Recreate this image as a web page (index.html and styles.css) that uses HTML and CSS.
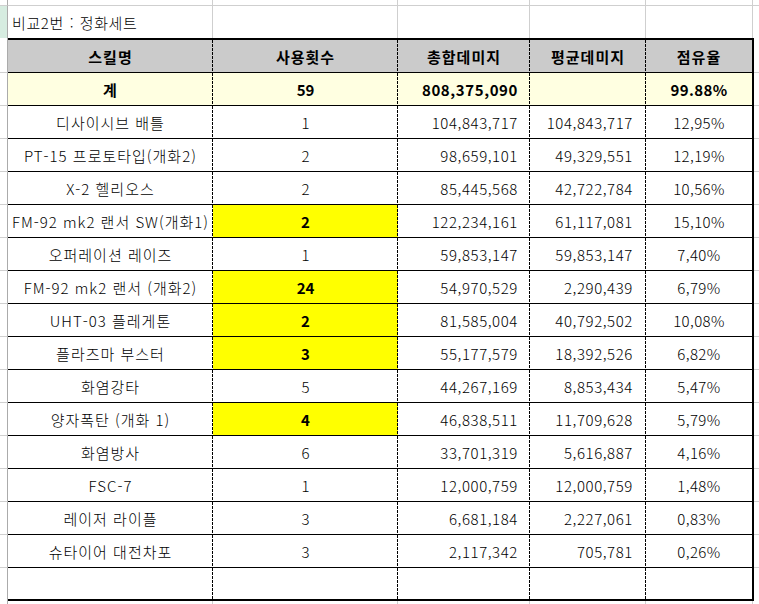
FILE: index.html
```html
<!DOCTYPE html>
<html lang="ko">
<head>
<meta charset="utf-8">
<title>비교2번 : 정화세트</title>
<link rel="stylesheet" href="styles.css">
</head>
<body>
<div class="sheet">
  <div class="row r-top">
    <div class="rh"></div><div class="c c1 g"></div><div class="c c2 g"></div><div class="c c3 g"></div><div class="c c4 g"></div><div class="c c5o g"></div><div class="rx"></div>
  </div>
  <div class="row r-title">
    <div class="rh rh-sel"></div><div class="c c1 g title">비교2번 : 정화세트</div><div class="c c2 g"></div><div class="c c3 g"></div><div class="c c4 g"></div><div class="c c5o g"></div><div class="rx"></div>
  </div>
  <div class="row thick">
    <div class="rh"></div><div class="bar"></div><div class="rx"></div>
  </div>
  <div class="row tr hd">
    <div class="rh"></div><div class="c c1 d">스킬명</div><div class="c c2 d">사용횟수</div><div class="c c3 d">총합데미지</div><div class="c c4 d">평균데미지</div><div class="c c5">점유율</div><div class="rx"></div>
  </div>
  <div class="row tr tot">
    <div class="rh"></div><div class="c c1 d">계</div><div class="c c2 d">59</div><div class="c c3 d num">808,375,090</div><div class="c c4 d num"></div><div class="c c5">99.88%</div><div class="rx"></div>
  </div>
  <div class="row tr">
    <div class="rh"></div><div class="c c1 d">디사이시브 배틀</div><div class="c c2 d">1</div><div class="c c3 d num">104,843,717</div><div class="c c4 d num">104,843,717</div><div class="c c5">12,95%</div><div class="rx"></div>
  </div>
  <div class="row tr">
    <div class="rh"></div><div class="c c1 d">PT-15 프로토타입(개화2)</div><div class="c c2 d">2</div><div class="c c3 d num">98,659,101</div><div class="c c4 d num">49,329,551</div><div class="c c5">12,19%</div><div class="rx"></div>
  </div>
  <div class="row tr">
    <div class="rh"></div><div class="c c1 d">X-2 헬리오스</div><div class="c c2 d">2</div><div class="c c3 d num">85,445,568</div><div class="c c4 d num">42,722,784</div><div class="c c5">10,56%</div><div class="rx"></div>
  </div>
  <div class="row tr">
    <div class="rh"></div><div class="c c1 d">FM-92 mk2 랜서 SW(개화1)</div><div class="c c2 d hl">2</div><div class="c c3 d num">122,234,161</div><div class="c c4 d num">61,117,081</div><div class="c c5">15,10%</div><div class="rx"></div>
  </div>
  <div class="row tr">
    <div class="rh"></div><div class="c c1 d">오퍼레이션 레이즈</div><div class="c c2 d">1</div><div class="c c3 d num">59,853,147</div><div class="c c4 d num">59,853,147</div><div class="c c5">7,40%</div><div class="rx"></div>
  </div>
  <div class="row tr">
    <div class="rh"></div><div class="c c1 d">FM-92 mk2 랜서 (개화2)</div><div class="c c2 d hl">24</div><div class="c c3 d num">54,970,529</div><div class="c c4 d num">2,290,439</div><div class="c c5">6,79%</div><div class="rx"></div>
  </div>
  <div class="row tr">
    <div class="rh"></div><div class="c c1 d">UHT-03 플레게톤</div><div class="c c2 d hl">2</div><div class="c c3 d num">81,585,004</div><div class="c c4 d num">40,792,502</div><div class="c c5">10,08%</div><div class="rx"></div>
  </div>
  <div class="row tr">
    <div class="rh"></div><div class="c c1 d">플라즈마 부스터</div><div class="c c2 d hl">3</div><div class="c c3 d num">55,177,579</div><div class="c c4 d num">18,392,526</div><div class="c c5">6,82%</div><div class="rx"></div>
  </div>
  <div class="row tr">
    <div class="rh"></div><div class="c c1 d">화염강타</div><div class="c c2 d">5</div><div class="c c3 d num">44,267,169</div><div class="c c4 d num">8,853,434</div><div class="c c5">5,47%</div><div class="rx"></div>
  </div>
  <div class="row tr">
    <div class="rh"></div><div class="c c1 d">양자폭탄 (개화 1)</div><div class="c c2 d hl">4</div><div class="c c3 d num">46,838,511</div><div class="c c4 d num">11,709,628</div><div class="c c5">5,79%</div><div class="rx"></div>
  </div>
  <div class="row tr">
    <div class="rh"></div><div class="c c1 d">화염방사</div><div class="c c2 d">6</div><div class="c c3 d num">33,701,319</div><div class="c c4 d num">5,616,887</div><div class="c c5">4,16%</div><div class="rx"></div>
  </div>
  <div class="row tr">
    <div class="rh"></div><div class="c c1 d">FSC-7</div><div class="c c2 d">1</div><div class="c c3 d num">12,000,759</div><div class="c c4 d num">12,000,759</div><div class="c c5">1,48%</div><div class="rx"></div>
  </div>
  <div class="row tr">
    <div class="rh"></div><div class="c c1 d">레이저 라이플</div><div class="c c2 d">3</div><div class="c c3 d num">6,681,184</div><div class="c c4 d num">2,227,061</div><div class="c c5">0,83%</div><div class="rx"></div>
  </div>
  <div class="row tr">
    <div class="rh"></div><div class="c c1 d">슈타이어 대전차포</div><div class="c c2 d">3</div><div class="c c3 d num">2,117,342</div><div class="c c4 d num">705,781</div><div class="c c5">0,26%</div><div class="rx"></div>
  </div>
  <div class="row tr last">
    <div class="rh"></div><div class="c c1 d"></div><div class="c c2 d"></div><div class="c c3 d"></div><div class="c c4 d"></div><div class="c c5"></div><div class="rx"></div>
  </div>
  <div class="row thick">
    <div class="rh"></div><div class="bar"></div><div class="rx"></div>
  </div>
  <div class="row r-bot">
    <div class="rh"></div><div class="c c1 g"></div><div class="c c2 g"></div><div class="c c3 g"></div><div class="c c4 g"></div><div class="c c5o g"></div><div class="rx"></div>
  </div>
</div>
</body>
</html>
```

FILE: styles.css
```css
html, body {
  margin: 0;
  padding: 0;
  background: #ffffff;
}

body {
  font-family: "Noto Sans CJK KR", "Noto Sans", sans-serif;
  font-size: 15px;
  font-weight: 300;
  color: #000000;
}

.sheet {
  display: flex;
  flex-direction: column;
  width: 759px;
  height: 604px;
  overflow: hidden;
}

.row {
  display: flex;
  flex: none;
}

.rh {
  flex: none;
  width: 8px;
  box-sizing: border-box;
  border-right: 1px solid #ababab;
}

.rh-sel {
  background: #d6ece0;
}

.rx {
  flex: 1;
}

.c {
  flex: none;
  box-sizing: border-box;
  display: flex;
  align-items: center;
  justify-content: center;
  white-space: nowrap;
}

.c1 { width: 205px; letter-spacing: 1px; }
.c2 { width: 185px; }
.c3 { width: 132px; }
.c4 { width: 116px; }
.c5 { width: 108px; }
.c5o { width: 107px; }

/* gridline cells outside the table */
.g {
  border-right: 1px solid #cfcfcf;
}

.r-top {
  height: 6px;
}

.r-top .c,
.r-top .rh,
.r-top .rx {
  border-bottom: 1px solid #cfcfcf;
}

.r-title {
  height: 32px;
}

.title {
  justify-content: flex-start;
  padding-left: 4px;
  overflow: visible;
  letter-spacing: 0.6px;
  word-spacing: 1px;
}

.thick {
  height: 2px;
}

.bar {
  flex: none;
  width: 746px;
  background: #000000;
}

.r-bot {
  height: 3px;
}

/* table rows */
.tr {
  height: 33px;
}

.tr .c {
  border-bottom: 1px solid #000000;
}

.tr .rh,
.tr .rx {
  border-bottom: 1px solid #cfcfcf;
}

.tr.last {
  height: 31px;
}

.tr.last .c {
  border-bottom: none;
}

.tr.last .rh,
.tr.last .rx {
  border-bottom: none;
}

/* dashed vertical separators */
.d {
  background-image: repeating-linear-gradient(to bottom, #000000 0, #000000 3px, transparent 3px, transparent 4px);
  background-size: 1px 100%;
  background-position: right top;
  background-repeat: no-repeat;
}

.tr .c5 {
  border-right: 2px solid #000000;
}

.num {
  justify-content: flex-end;
  letter-spacing: 0.6px;
}

.c3.num { padding-right: 12px; }
.c4.num { padding-right: 13px; }

.c5 {
  letter-spacing: 0.4px;
}

.hd .c {
  background-color: #cbcbcb;
  font-weight: bold;
  letter-spacing: 1px;
}

.tot .c {
  background-color: #ffffe1;
  font-weight: bold;
}

.hl {
  background-color: #ffff00;
  font-weight: bold;
}
```
